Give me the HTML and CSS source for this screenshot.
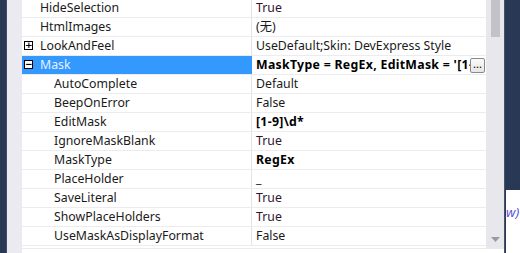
FILE: index.html
```html
<!DOCTYPE html>
<html>
<head>
<meta charset="utf-8">
<link rel="stylesheet" href="styles.css">
</head>
<body>
<div class="frame">
  <div class="nav"></div>
  <div class="gutter"></div>
  <div class="grid">
    <div class="rows">
      <div class="row"><div class="name">HideSelection</div><div class="value t">True</div></div>
      <div class="row"><div class="name">HtmlImages</div><div class="value">(无)</div></div>
      <div class="row"><div class="name"><span class="box">+</span>LookAndFeel</div><div class="value">UseDefault;Skin: DevExpress Style</div></div>
      <div class="row sel"><div class="name"><span class="box">−</span>Mask</div><div class="value b"><span class="clip">MaskType = RegEx, EditMask = '[1-9]\d*'</span><span class="dots">...</span></div></div>
      <div class="row"><div class="name child">AutoComplete</div><div class="value">Default</div></div>
      <div class="row"><div class="name child">BeepOnError</div><div class="value">False</div></div>
      <div class="row"><div class="name child">EditMask</div><div class="value b">[1-9]\d*</div></div>
      <div class="row"><div class="name child">IgnoreMaskBlank</div><div class="value t">True</div></div>
      <div class="row"><div class="name child">MaskType</div><div class="value b">RegEx</div></div>
      <div class="row"><div class="name child">PlaceHolder</div><div class="value">_</div></div>
      <div class="row"><div class="name child">SaveLiteral</div><div class="value t">True</div></div>
      <div class="row"><div class="name child">ShowPlaceHolders</div><div class="value t">True</div></div>
      <div class="row"><div class="name child">UseMaskAsDisplayFormat</div><div class="value">False</div></div>
    </div>
    <div class="tail"></div>
  </div>
  <div class="scroll">
    <div class="track">
      <div class="thumb"></div>
      <svg class="arrow" width="9" height="5" viewBox="0 0 9 5"><polygon points="0,0 9,0 4.5,5" fill="#9a9aa2"/></svg>
    </div>
  </div>
  <div class="side">
    <div class="side-dark"></div>
    <div class="side-light"><span class="peek">w)</span></div>
  </div>
</div>
</body>
</html>
```
FILE: styles.css
```css
html, body {
  margin: 0;
  padding: 0;
  background: #ffffff;
  overflow: hidden;
}
.frame {
  display: flex;
  width: 520px;
  height: 253px;
  font-family: "Noto Sans", "Noto Sans CJK SC", sans-serif;
  font-size: 12.3px;
  color: #1a1a1a;
}
.nav {
  width: 6px;
  background: #293955;
  border-right: 1px solid #3d4d6a;
}
.gutter {
  width: 15px;
  background: #eaeaf0;
}
.grid {
  width: 464px;
  background: #ffffff;
  display: flex;
  flex-direction: column;
}
.rows {
  margin-top: -1px;
  display: flex;
  flex-direction: column;
}
.row {
  display: flex;
  height: 18px;
  border-bottom: 1px solid #ececef;
}
.name {
  width: 211px;
  padding-left: 18px;
  border-right: 1px solid #e4e4e8;
  line-height: 18px;
  white-space: nowrap;
  display: flex;
  align-items: center;
  position: relative;
}
.name.child {
  padding-left: 32px;
  width: 197px;
}
.box {
  position: absolute;
  left: 2px;
  top: 4px;
  width: 7px;
  height: 7px;
  border: 1px solid #000;
  background: #fff;
  color: #000;
  font-family: "DejaVu Sans", sans-serif;
  font-size: 9px;
  line-height: 7px;
  text-align: center;
  font-weight: bold;
}
.value {
  flex: 1;
  padding-left: 4px;
  line-height: 18px;
  white-space: nowrap;
  overflow: hidden;
  display: flex;
  align-items: center;
}
.value.t { color: #30152f; }
.value.b { font-weight: bold; color: #000; letter-spacing: 0.3px; }
.sel .name {
  background: #3399ff;
  color: #e8f1ff;
  border-right-color: #3399ff;
}
.clip {
  width: 214px;
  overflow: hidden;
  flex: none;
}
.dots {
  flex: none;
  width: 13px;
  height: 13px;
  border: 1px solid #8a8a8a;
  border-radius: 2px;
  background: linear-gradient(#fbfbfb, #e6e6e6);
  font-weight: normal;
  letter-spacing: 0;
  font-size: 11px;
  line-height: 9px;
  text-align: center;
  color: #000;
}
.tail {
  margin-top: 2px;
  border-top: 1px solid #ececef;
}
.scroll {
  width: 18px;
  display: flex;
  flex-direction: column;
}
.track {
  height: 249px;
  background: #e8e8ec;
  display: flex;
  flex-direction: column;
  align-items: center;
}
.thumb {
  width: 9px;
  height: 37px;
  background: #c2c3c9;
}
.arrow {
  margin-top: auto;
  margin-bottom: 7px;
}
.side {
  width: 15px;
  border-left: 1px solid #44546f;
  display: flex;
  flex-direction: column;
}
.side-dark {
  height: 190px;
  background: #293955;
}
.side-light {
  flex: 1;
  background: #ffffff;
  border-left: 1px solid #293955;
  overflow: hidden;
  padding-top: 13px;
}
.peek {
  color: #5a4fe0;
  font-size: 13px;
  white-space: nowrap;
  font-style: italic;
}
```
